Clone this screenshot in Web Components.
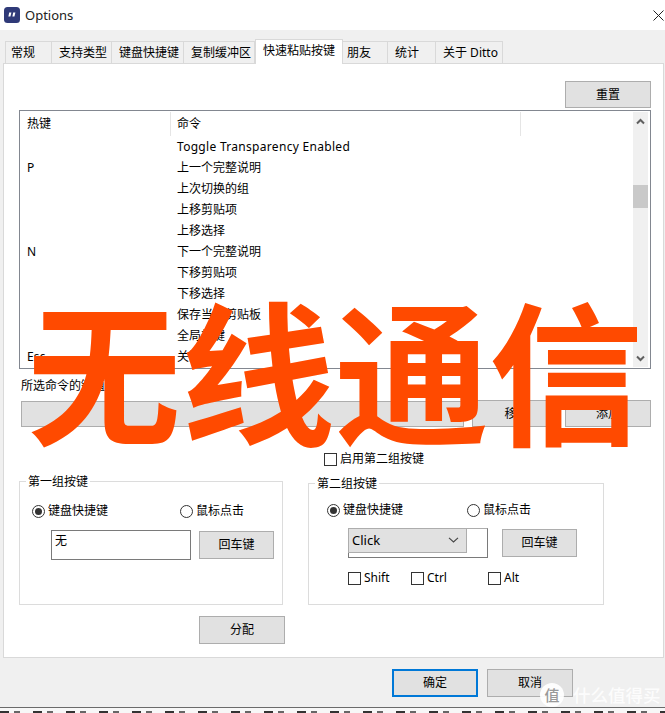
<!DOCTYPE html>
<html lang="zh">
<head>
<meta charset="utf-8">
<title>Options</title>
<style>
  html, body { margin: 0; padding: 0; }
  body {
    width: 665px; height: 713px; overflow: hidden; background: #f0f0f0; color: #000;
    font: 12px/16px "Noto Sans", "Noto Sans CJK SC", sans-serif;
  }
</style>
</head>
<body>
<opt-window>
  <opt-tabs>
    <opt-tab w="47" pad="5" first>常规</opt-tab>
    <opt-tab w="60" pad="7">支持类型</opt-tab>
    <opt-tab w="72" pad="7">键盘快捷键</opt-tab>
    <opt-tab w="71" pad="7">复制缓冲区</opt-tab>
    <opt-tab w="88" pad="7" active>快速粘贴按键</opt-tab>
    <opt-tab w="45" pad="4">朋友</opt-tab>
    <opt-tab w="48" pad="7">统计</opt-tab>
    <opt-tab w="67" pad="7">关于 Ditto</opt-tab>
  </opt-tabs>
  <opt-panel>
    <opt-list>
      <opt-row style="--row-spacing:.3px">Toggle Transparency Enabled</opt-row>
      <opt-row key="P">上一个完整说明</opt-row>
      <opt-row>上次切换的组</opt-row>
      <opt-row>上移剪贴项</opt-row>
      <opt-row>上移选择</opt-row>
      <opt-row key="N">下一个完整说明</opt-row>
      <opt-row>下移剪贴项</opt-row>
      <opt-row>下移选择</opt-row>
      <opt-row>保存当前剪贴板</opt-row>
      <opt-row>全局热键</opt-row>
      <opt-row key="Esc">关闭窗口</opt-row>
    </opt-list>
  </opt-panel>
</opt-window>
<opt-slogan>无线通信</opt-slogan>
<opt-watermark>什么值得买</opt-watermark>

<script>
// shared box drawn by all the grey push buttons
class OptButton extends HTMLElement {
  constructor() {
    super();
    this.attachShadow({mode: "open"});
  }
  connectedCallback() {
    const focus = this.hasAttribute("focus");
    this.shadowRoot.innerHTML = /*html*/ `
      <style>
        :host {
          display: inline-flex; align-items: center; justify-content: center;
          box-sizing: border-box; flex: none;
          width: ${this.getAttribute("w") || 86}px;
          height: ${this.getAttribute("h") || 28}px;
          background: #e1e1e1;
          border: ${focus ? "2px solid #0078d7" : "1px solid #adadad"};
        }
      </style><slot></slot>`;
  }
}

class OptTab extends HTMLElement {
  constructor() {
    super();
    this.attachShadow({mode: "open"});
  }
  connectedCallback() {
    const active = this.hasAttribute("active");
    const left = active || this.hasAttribute("first") ? "1px solid #d9d9d9" : "0";
    this.shadowRoot.innerHTML = /*html*/ `
      <style>
        :host {
          display: flex; align-items: center;
          box-sizing: border-box; flex: none;
          width: ${this.getAttribute("w")}px;
          height: ${active ? 25 : 22}px;
          padding-left: ${this.getAttribute("pad")}px;
          background: ${active ? "#fff" : "#f0f0f0"};
          border: 1px solid #d9d9d9; border-left: ${left}; border-bottom: 0;
          ${active ? "margin-bottom: -1px; padding-bottom: 2px; position: relative; z-index: 1;" : ""}
        }
      </style><slot></slot>`;
  }
}

class OptTabs extends HTMLElement {
  constructor() {
    super();
    this.attachShadow({mode: "open"});
    this.shadowRoot.innerHTML = /*html*/ `
      <style>
        :host { display: flex; align-items: flex-end; height: 24px; padding: 9px 0 0 5px; }
      </style><slot></slot>`;
  }
}

class OptRow extends HTMLElement {
  constructor() {
    super();
    this.attachShadow({mode: "open"});
  }
  connectedCallback() {
    this.shadowRoot.innerHTML = /*html*/ `
      <style>
        :host { display: flex; height: 21px; align-items: center; }
        .key { width: 151px; padding-left: 7px; box-sizing: border-box; }
        .cmd { padding-left: 6px; letter-spacing: var(--row-spacing, 0); }
      </style>
      <div class="key">${this.getAttribute("key") || ""}</div>
      <div class="cmd"><slot></slot></div>`;
  }
}

class OptList extends HTMLElement {
  constructor() {
    super();
    this.attachShadow({mode: "open"});
    this.shadowRoot.innerHTML = /*html*/ `
      <style>
        :host {
          display: flex; box-sizing: border-box; width: 632px; height: 259px;
          border: 1px solid #828790; background: #fff;
        }
        .main { flex: 1; min-width: 0; overflow: hidden; }
        .head { display: flex; height: 25px; }
        .head div { box-sizing: border-box; padding: 0 0 1px 6px; display: flex; align-items: center; height: 24px; margin-top: 1px; }
        .c1 { width: 151px; border-right: 1px solid #e5e5e5; padding-left: 7px !important; }
        .c2 { width: 350px; border-right: 1px solid #e5e5e5; }
        .bar {
          width: 15px; margin: 1px 2px 1px 0; background: #f0f0f0;
          display: flex; flex-direction: column; align-items: center; flex: none;
        }
        .bar svg { display: block; margin-top: 6px; }
        .thumb { width: 15px; height: 23px; background: #c9c9c9; margin-top: 60px; }
        .bar .down { margin-top: auto; margin-bottom: 5px; }
      </style>
      <div class="main">
        <div class="head"><div class="c1">热键</div><div class="c2">命令</div></div>
        <slot></slot>
      </div>
      <div class="bar">
        <svg width="9" height="7" viewBox="0 0 9 7"><path d="M1 5.5 4.5 2 8 5.5" fill="none" stroke="#606060" stroke-width="2"/></svg>
        <div class="thumb"></div>
        <svg class="down" width="9" height="7" viewBox="0 0 9 7"><path d="M1 1.5 4.5 5 8 1.5" fill="none" stroke="#606060" stroke-width="2"/></svg>
      </div>`;
  }
}

class OptRadio extends HTMLElement {
  constructor() {
    super();
    this.attachShadow({mode: "open"});
  }
  connectedCallback() {
    const dot = this.hasAttribute("checked") ? '<circle cx="6.5" cy="6.5" r="3.5" fill="#333"/>' : "";
    this.shadowRoot.innerHTML = /*html*/ `
      <style>
        :host { display: flex; align-items: center; gap: 3px; flex: none; width: ${this.getAttribute("w") || 100}px; height: 16px; }
        svg { display: block; flex: none; }
      </style>
      <svg width="13" height="13" viewBox="0 0 13 13"><circle cx="6.5" cy="6.5" r="6" fill="#fff" stroke="#333"/>${dot}</svg>
      <slot></slot>`;
  }
}

class OptCheck extends HTMLElement {
  constructor() {
    super();
    this.attachShadow({mode: "open"});
  }
  connectedCallback() {
    const w = this.getAttribute("w");
    this.shadowRoot.innerHTML = /*html*/ `
      <style>
        :host { display: flex; align-items: center; gap: 3px; flex: none; height: 16px; ${w ? `width:${w}px;` : ""} }
        .box { width: 13px; height: 13px; box-sizing: border-box; border: 1px solid #333; background: #fff; flex: none; }
      </style>
      <div class="box"></div><slot></slot>`;
  }
}

class OptGroup extends HTMLElement {
  constructor() {
    super();
    this.attachShadow({mode: "open"});
  }
  connectedCallback() {
    this.shadowRoot.innerHTML = /*html*/ `
      <style>
        :host {
          display: flex; flex-direction: column; box-sizing: border-box; flex: none;
          width: ${this.getAttribute("w")}px; height: ${this.getAttribute("h")}px;
          border: 1px solid #dcdcdc; background: #fff;
        }
        .legend {
          align-self: flex-start; margin: -8px 0 0 ${this.getAttribute("lx")}px;
          padding: 0 2px; height: 16px; background: #fff;
        }
      </style>
      <div class="legend">${this.getAttribute("legend")}</div>
      <slot></slot>`;
  }
}

class OptPanel extends HTMLElement {
  constructor() {
    super();
    this.attachShadow({mode: "open"});
    this.shadowRoot.innerHTML = /*html*/ `
      <style>
        :host {
          display: flex; flex-direction: column; box-sizing: border-box;
          width: 661px; height: 595px; margin-left: 3px;
          border: 1px solid #d9d9d9; background: #fff;
        }
        .top { display: flex; justify-content: flex-end; padding: 17px 12px 0 0; }
        .list { margin: 2px 0 0 15px; }
        .hint { margin: 9px 0 0 17px; height: 16px; }
        .keys { display: flex; margin: 6px 0 0 17px; height: 27px; }
        .keys .field { box-sizing: border-box; width: 443px; height: 26px; margin-top: 1px; background: #e1e1e1; border: 1px solid #adadad; }
        .keys .move { margin-left: 8px; }
        .keys .add { margin-left: 4px; }
        .second { margin: 24px 0 0 320px; }
        .groups { display: flex; align-items: flex-start; margin: 14px 0 0 15px; }
        .g1 { margin-right: 25px; }
        .g2 { margin-top: 2px; }
        .choice { display: flex; }
        .g1 .choice { margin: 13px 0 0 12px; }
        .g2 .choice { margin: 10px 0 0 18px; }
        .entry { display: flex; align-items: flex-start; }
        .g1 .entry { margin: 11px 0 0 31px; gap: 8px; }
        .g2 .entry { margin: 10px 0 0 39px; gap: 14px; }
        .entry opt-button { margin-top: 1px; }
        .text { box-sizing: border-box; width: 140px; height: 30px; border: 1px solid #7a7a7a; padding: 2px 3px; line-height: 16px; }
        .combo { box-sizing: border-box; width: 140px; height: 30px; border: 1px solid #7a7a7a; border-top-color: #adadad; }
        .select {
          display: flex; align-items: center; justify-content: space-between; box-sizing: border-box;
          width: 119px; height: 25px; margin: -1px 0 0 -1px; padding: 0 7px 1px 3px;
          background: #e1e1e1; border: 1px solid #adadad; font-size: 13px;
        }
        .select svg { display: block; }
        .mods { display: flex; margin: 12px 0 0 39px; }
        .assign { margin: 11px 0 0 195px; }
      </style>
      <div class="top"><opt-button h="27">重置</opt-button></div>
      <div class="list"><slot></slot></div>
      <div class="hint">所选命令的键值</div>
      <div class="keys">
        <div class="field"></div>
        <opt-button class="move" w="89" h="27">移除</opt-button>
        <opt-button class="add" w="86" h="27">添加</opt-button>
      </div>
      <div class="second"><opt-check>启用第二组按键</opt-check></div>
      <div class="groups">
        <opt-group class="g1" w="264" h="124" lx="6" legend="第一组按键">
          <div class="choice"><opt-radio w="148" checked>键盘快捷键</opt-radio><opt-radio w="80">鼠标点击</opt-radio></div>
          <div class="entry"><div class="text">无</div><opt-button w="75" h="28">回车键</opt-button></div>
        </opt-group>
        <opt-group class="g2" w="296" h="122" lx="6" legend="第二组按键">
          <div class="choice"><opt-radio w="140" checked>键盘快捷键</opt-radio><opt-radio w="80">鼠标点击</opt-radio></div>
          <div class="entry">
            <div class="combo"><div class="select">Click<svg width="11" height="6" viewBox="0 0 11 6"><path d="M1 .8 5.5 5 10 .8" fill="none" stroke="#444" stroke-width="1.1"/></svg></div></div>
            <opt-button w="75" h="28">回车键</opt-button>
          </div>
          <div class="mods"><opt-check w="63">Shift</opt-check><opt-check w="77">Ctrl</opt-check><opt-check>Alt</opt-check></div>
        </opt-group>
      </div>
      <div class="assign"><opt-button h="28">分配</opt-button></div>`;
  }
}

class OptWindow extends HTMLElement {
  constructor() {
    super();
    this.attachShadow({mode: "open"});
    this.shadowRoot.innerHTML = /*html*/ `
      <style>
        :host { display: block; width: 665px; height: 713px; overflow: hidden; }
        .title {
          display: flex; align-items: center; height: 30px; background: #fff; padding: 0 1px 0 4px;
          font-size: 13px; color: #222;
        }
        .title span { margin-left: 5px; flex: 1; }
        .title svg { display: block; flex: none; }
        .foot { display: flex; gap: 9px; height: 49px; box-sizing: border-box; padding: 11px 0 0 392px; }
        .rule { height: 1px; background: #6b6b6b; }
        .strip {
          height: 5px; background-color: #f7f7f7;
          background-image: repeating-linear-gradient(90deg, #333 0 9px, transparent 9px 14px, #666 14px 20px, transparent 20px 33px);
          background-size: 100% 2px; background-position: 0 3px; background-repeat: no-repeat;
        }
      </style>
      <div class="title">
        <svg width="16" height="16" viewBox="0 0 16 16"><rect width="16" height="16" rx="3.5" fill="#2f3a78"/><path d="M5.2 5.5h2.2L6.4 9.6H4.4zM9.2 5.5h2.2l-1 4.1H8.4z" fill="#fff"/></svg>
        <span>Options</span>
        <svg width="11" height="11" viewBox="0 0 11 11"><path d="M.5.5l10 10M10.5.5l-10 10" stroke="#222" stroke-width="1"/></svg>
      </div>
      <slot></slot>
      <div class="foot"><opt-button focus>确定</opt-button><opt-button>取消</opt-button></div>
      <div class="rule"></div>
      <div class="strip"></div>`;
  }
}

// big orange caption pasted over the dialog
class OptSlogan extends HTMLElement {
  constructor() {
    super();
    this.attachShadow({mode: "open"});
    this.shadowRoot.innerHTML = /*html*/ `
      <style>
        :host {
          position: absolute; left: 27px; top: 259px; white-space: nowrap;
          font: 700 154px/1.4 "Noto Sans CJK SC", sans-serif; color: #ff4a00;
        }
      </style><slot></slot>`;
  }
}

class OptWatermark extends HTMLElement {
  constructor() {
    super();
    this.attachShadow({mode: "open"});
    this.shadowRoot.innerHTML = /*html*/ `
      <style>
        :host {
          position: absolute; left: 540px; top: 683px; display: flex; align-items: center; gap: 9px;
          font: 500 17.5px/24px "Noto Sans CJK SC", sans-serif; color: rgba(255,255,255,.85);
        }
        .logo {
          width: 24px; height: 24px; border-radius: 50%; background: rgba(255,255,255,.92);
          display: flex; align-items: center; justify-content: center;
          font-size: 15px; color: #999;
        }
      </style>
      <div class="logo">值</div><slot></slot>`;
  }
}

customElements.define("opt-button", OptButton);
customElements.define("opt-tab", OptTab);
customElements.define("opt-tabs", OptTabs);
customElements.define("opt-row", OptRow);
customElements.define("opt-list", OptList);
customElements.define("opt-radio", OptRadio);
customElements.define("opt-check", OptCheck);
customElements.define("opt-group", OptGroup);
customElements.define("opt-panel", OptPanel);
customElements.define("opt-window", OptWindow);
customElements.define("opt-slogan", OptSlogan);
customElements.define("opt-watermark", OptWatermark);
</script>
</body>
</html>
